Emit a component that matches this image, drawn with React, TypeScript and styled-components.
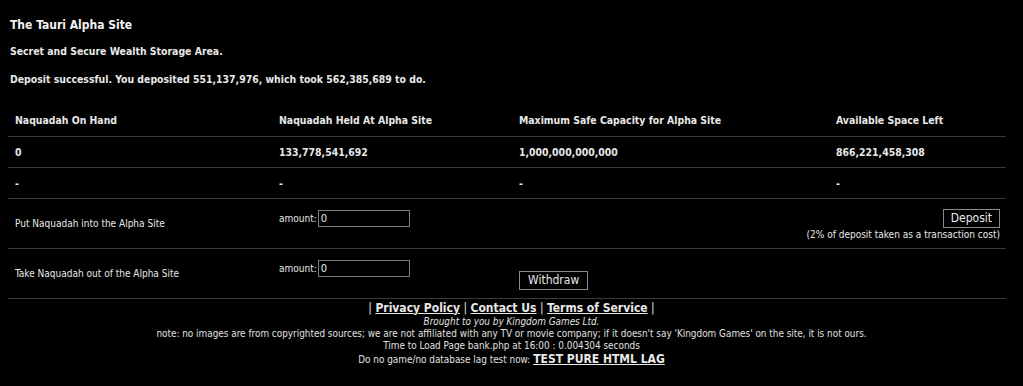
import React from "react";
import styled, { createGlobalStyle } from "styled-components";

const GlobalStyle = createGlobalStyle`
  html, body {
    margin: 0;
    padding: 0;
    background: #000;
  }
  body {
    color: #e8e8e8;
    font-family: "DejaVu Sans Condensed", "DejaVu Sans", Tahoma, sans-serif;
    font-size: 10px;
  }
`;

const stats = [
  { name: "Naquadah On Hand", value: "0" },
  { name: "Naquadah Held At Alpha Site", value: "133,778,541,692" },
  { name: "Maximum Safe Capacity for Alpha Site", value: "1,000,000,000,000" },
  { name: "Available Space Left", value: "866,221,458,308" },
];

const App: React.FC = () => {
  return (
    <StyledPage>
      <GlobalStyle />
      <StyledTitle>The Tauri Alpha Site</StyledTitle>
      <StyledSub $gap={11}>Secret and Secure Wealth Storage Area.</StyledSub>
      <StyledSub $gap={14}>
        Deposit successful. You deposited 551,137,976, which took 562,385,689 to do.
      </StyledSub>

      <StyledTable>
        <colgroup>
          <col style={{ width: 264 }} />
          <col style={{ width: 240 }} />
          <col style={{ width: 317 }} />
          <col />
        </colgroup>
        <tbody>
          <StyledRow>
            {stats.map((s) => (
              <StyledHeadCell key={s.name}>{s.name}</StyledHeadCell>
            ))}
          </StyledRow>
          <StyledRow>
            {stats.map((s) => (
              <StyledHeadCell key={s.name}>{s.value}</StyledHeadCell>
            ))}
          </StyledRow>
          <StyledRow>
            {stats.map((s) => (
              <StyledHeadCell key={s.name}>-</StyledHeadCell>
            ))}
          </StyledRow>
          <StyledActionRow>
            <StyledLabelCell>Put Naquadah into the Alpha Site</StyledLabelCell>
            <StyledTopCell>
              <StyledAmount>
                amount:
                <StyledInput defaultValue="0" />
              </StyledAmount>
            </StyledTopCell>
            <StyledTopCell />
            <StyledTopCell>
              <StyledDepositBox>
                <StyledButton>Deposit</StyledButton>
                <StyledNote>(2% of deposit taken as a transaction cost)</StyledNote>
              </StyledDepositBox>
            </StyledTopCell>
          </StyledActionRow>
          <StyledActionRow>
            <StyledLabelCell>Take Naquadah out of the Alpha Site</StyledLabelCell>
            <StyledTopCell>
              <StyledAmount>
                amount:
                <StyledInput defaultValue="0" />
              </StyledAmount>
            </StyledTopCell>
            <StyledTopCell $offset={22}>
              <StyledButton $wide>Withdraw</StyledButton>
            </StyledTopCell>
            <StyledTopCell />
          </StyledActionRow>
        </tbody>
      </StyledTable>

      <StyledFooter>
        <StyledLinks>
          | <a href="#">Privacy Policy</a> | <a href="#">Contact Us</a> |{" "}
          <a href="#">Terms of Service</a> |
        </StyledLinks>
        <StyledCredit>Brought to you by Kingdom Games Ltd.</StyledCredit>
        <div>
          note: no images are from copyrighted sources; we are not affiliated with any TV or
          movie company; if it doesn't say 'Kingdom Games' on the site, it is not ours.
        </div>
        <div>Time to Load Page bank.php at 16:00 : 0.004304 seconds</div>
        <StyledLagLine>
          Do no game/no database lag test now: <StyledLagLink href="#">TEST PURE HTML LAG</StyledLagLink>
        </StyledLagLine>
      </StyledFooter>
    </StyledPage>
  );
};

const StyledPage = styled.div`
  padding: 17px 0 0 0;
  width: 1023px;
  height: 386px;
  box-sizing: border-box;
  overflow: hidden;
`;

const StyledTitle = styled.div`
  font-weight: bold;
  font-size: 12px;
  line-height: 16px;
  padding-left: 10px;
  color: #f2f2f2;
`;

const StyledSub = styled.div<{ $gap: number }>`
  font-weight: bold;
  font-size: 10.4px;
  line-height: 14px;
  padding-left: 10px;
  margin-top: ${(p) => p.$gap}px;
`;

const StyledTable = styled.table`
  margin: 19px 0 0 8px;
  width: 998px;
  border-collapse: collapse;
  table-layout: fixed;
`;

const StyledRow = styled.tr`
  height: 31px;
  border-bottom: 1px solid #3a3a3a;
`;

const StyledHeadCell = styled.td`
  font-weight: bold;
  font-size: 10.4px;
  padding: 0 7px;
  vertical-align: middle;
`;

const StyledActionRow = styled.tr`
  height: 50px;
  border-bottom: 1px solid #3a3a3a;
`;

const StyledLabelCell = styled.td`
  padding: 0 7px;
  vertical-align: middle;
`;

const StyledTopCell = styled.td<{ $offset?: number }>`
  vertical-align: top;
  padding: ${(p) => p.$offset ?? 10}px 6px 0 7px;
  white-space: nowrap;
`;

const StyledDepositBox = styled.div`
  display: flex;
  flex-direction: column;
  align-items: flex-end;
`;

const StyledAmount = styled.div`
  display: flex;
  align-items: center;
  padding-top: 1px;
`;

const StyledInput = styled.input`
  width: 92px;
  height: 17px;
  box-sizing: border-box;
  margin: 0 0 0 1px;
  padding: 0 2px;
  background: #000;
  color: #e8e8e8;
  border: 1px solid #7a7a7a;
  font-family: inherit;
  font-size: 11px;
`;

const StyledButton = styled.button<{ $wide?: boolean }>`
  height: 19px;
  padding: 0 ${(p) => (p.$wide ? 8 : 7)}px;
  margin: 0;
  background: #000;
  color: #e8e8e8;
  border: 1px solid #8a8a8a;
  font-family: inherit;
  font-size: 12px;
  line-height: 17px;
`;

const StyledNote = styled.div`
  line-height: 13px;
`;

const StyledFooter = styled.div`
  margin-top: 2px;
  text-align: center;
  font-size: 9.9px;
  line-height: 12px;
  color: #e0e0e0;

  a {
    color: #e8e8e8;
    font-weight: bold;
  }
`;

const StyledLinks = styled.div`
  font-size: 12px;
  line-height: 15px;
`;

const StyledCredit = styled.div`
  font-style: italic;
`;

const StyledLagLine = styled.div`
  margin-top: 1px;
`;

const StyledLagLink = styled.a`
  font-size: 12px;
`;

export default App;
